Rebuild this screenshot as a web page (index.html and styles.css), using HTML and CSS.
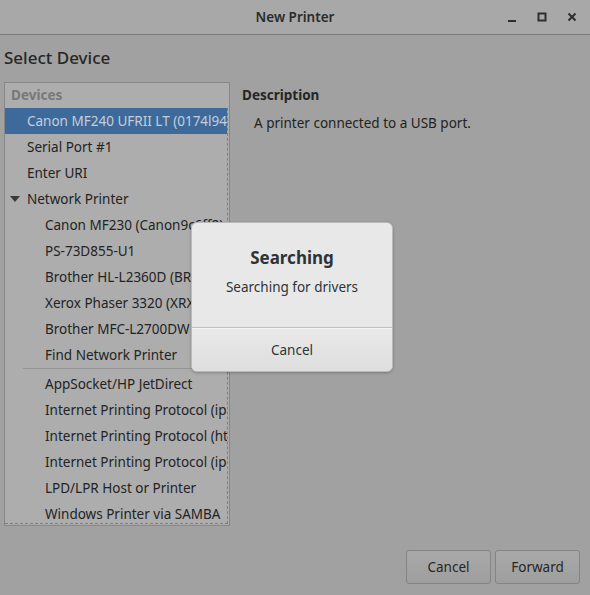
FILE: index.html
```html
<!DOCTYPE html>
<html>
<head>
<meta charset="utf-8">
<link rel="stylesheet" href="styles.css">
</head>
<body>
<div class="window">
  <header class="titlebar">
    <div class="tb-spacer"></div>
    <div class="tb-title">New Printer</div>
    <div class="tb-controls">
      <svg class="ctl" width="14" height="14" viewBox="0 0 14 14"><rect x="3" y="10" width="8" height="2" fill="#2e2e2e"/></svg>
      <svg class="ctl" width="14" height="14" viewBox="0 0 14 14"><rect x="3.5" y="3.5" width="7" height="7" fill="none" stroke="#2e2e2e" stroke-width="2"/></svg>
      <svg class="ctl" width="14" height="14" viewBox="0 0 14 14"><path d="M3.5 3.5 L10.5 10.5 M10.5 3.5 L3.5 10.5" stroke="#2e2e2e" stroke-width="2"/></svg>
    </div>
  </header>

  <main class="content">
    <h1 class="page-title">Select Device</h1>
    <div class="columns">
      <div class="devlist">
        <div class="devhead">Devices</div>
        <div class="rows">
          <div class="row top selected">Canon MF240 UFRII LT (0174l94e)</div>
          <div class="row top">Serial Port #1</div>
          <div class="row top">Enter URI</div>
          <div class="row top expander"><span class="tri"></span>Network Printer</div>
          <div class="row child">Canon MF230 (Canon9c6ff8)</div>
          <div class="row child">PS-73D855-U1</div>
          <div class="row child">Brother HL-L2360D (BRN30055C)</div>
          <div class="row child">Xerox Phaser 3320 (XRX9C934E)</div>
          <div class="row child">Brother MFC-L2700DW (BRW)</div>
          <div class="row child">Find Network Printer</div>
          <div class="sep"></div>
          <div class="row child">AppSocket/HP JetDirect</div>
          <div class="row child">Internet Printing Protocol (ipp)</div>
          <div class="row child">Internet Printing Protocol (https)</div>
          <div class="row child">Internet Printing Protocol (ipps)</div>
          <div class="row child">LPD/LPR Host or Printer</div>
          <div class="row child">Windows Printer via SAMBA</div>
        </div>
      </div>
      <div class="desc">
        <div class="desc-head">Description</div>
        <div class="desc-text">A printer connected to a USB port.</div>
      </div>
    </div>
  </main>

  <footer class="actions">
    <button class="btn">Cancel</button>
    <button class="btn">Forward</button>
  </footer>

  <div class="modal">
    <div class="modal-body">
      <div class="modal-title">Searching</div>
      <div class="modal-text">Searching for drivers</div>
    </div>
    <div class="modal-btn">Cancel</div>
  </div>
</div>
</body>
</html>
```

FILE: styles.css
```css
* { box-sizing: border-box; }
html, body { margin: 0; padding: 0; }
body {
  width: 590px;
  height: 595px;
  background: #a1a1a1;
  font-family: "Noto Sans", "DejaVu Sans", sans-serif;
  font-size: 13.5px;
  color: #232323;
  overflow: hidden;
}
.window {
  position: relative;
  width: 590px;
  height: 595px;
  display: flex;
  flex-direction: column;
}
.titlebar {
  height: 35px;
  background: #a8a8a8;
  border-bottom: 1px solid #7a7a7a;
  display: grid;
  grid-template-columns: 1fr auto 1fr;
  align-items: center;
}
.tb-title {
  font-weight: 600;
  font-size: 13.5px;
  color: #2b2b2b;
}
.tb-controls {
  display: flex;
  justify-content: flex-end;
  gap: 16px;
  padding-right: 11px;
  align-items: center;
}
.ctl { display: block; }
.content {
  flex: 1;
  padding: 0 0 0 4px;
  display: flex;
  flex-direction: column;
}
.page-title {
  margin: 0;
  font-size: 17px;
  font-weight: 500;
  color: #262626;
  height: 47px;
  line-height: 45px;
}
.columns {
  display: flex;
  gap: 12px;
}
.devlist {
  width: 226px;
  height: 444px;
  border: 1px solid #878787;
  background: #adadad;
  display: flex;
  flex-direction: column;
}
.devhead {
  height: 25px;
  line-height: 24px;
  padding-left: 6px;
  font-weight: 700;
  color: #787878;
}
.rows {
  flex: 1;
  border-right: 1px dashed #7e7e7e;
  border-bottom: 1px dashed #7e7e7e;
  margin-right: 1px;
  margin-bottom: 1px;
  overflow: hidden;
}
.row {
  height: 26px;
  line-height: 26px;
  white-space: nowrap;
  overflow: hidden;
}
.row.top { padding-left: 22px; }
.row.child { padding-left: 40px; }
.row.selected {
  background: #3d6a9b;
  color: #c5ced8;
}
.row.expander { position: relative; }
.tri {
  position: absolute;
  left: 5px;
  top: 10px;
  width: 0;
  height: 0;
  border-left: 5px solid transparent;
  border-right: 5px solid transparent;
  border-top: 6px solid #3a3a3a;
}
.sep {
  height: 3px;
  margin-left: 18px;
  border-top: 1px solid #959595;
}
.desc-head {
  font-weight: 700;
  height: 26px;
  line-height: 26px;
  color: #262626;
}
.desc-text {
  padding-left: 12px;
  height: 30px;
  line-height: 30px;
}
.actions {
  display: flex;
  justify-content: flex-end;
  gap: 4px;
  padding: 0 10px 11px 0;
}
.btn {
  font-family: inherit;
  font-size: 13.5px;
  color: #262626;
  width: 85px;
  height: 34px;
  border: 1px solid #848484;
  border-radius: 3px;
  background: linear-gradient(#a9a9a9, #9e9e9e);
  padding: 0;
}
.modal {
  position: absolute;
  left: 191px;
  top: 222px;
  width: 202px;
  height: 150px;
  background: #e8e8e8;
  border: 1px solid #b9b9b9;
  border-radius: 6px;
  box-shadow: 0 1px 3px rgba(0,0,0,0.25);
  display: flex;
  flex-direction: column;
  overflow: hidden;
  color: #2e3436;
}
.modal-body {
  height: 105px;
  display: flex;
  flex-direction: column;
  align-items: center;
  border-bottom: 1px solid #c0c0c0;
}
.modal-title {
  margin-top: 22px;
  font-size: 17px;
  font-weight: 700;
  height: 26px;
  line-height: 26px;
}
.modal-text {
  margin-top: 6px;
  height: 20px;
  line-height: 20px;
}
.modal-btn {
  flex: 1;
  display: flex;
  align-items: center;
  justify-content: center;
  background: linear-gradient(#e9e9e9, #dedede);
  border-top: 1px solid #f4f4f4;
}
```
